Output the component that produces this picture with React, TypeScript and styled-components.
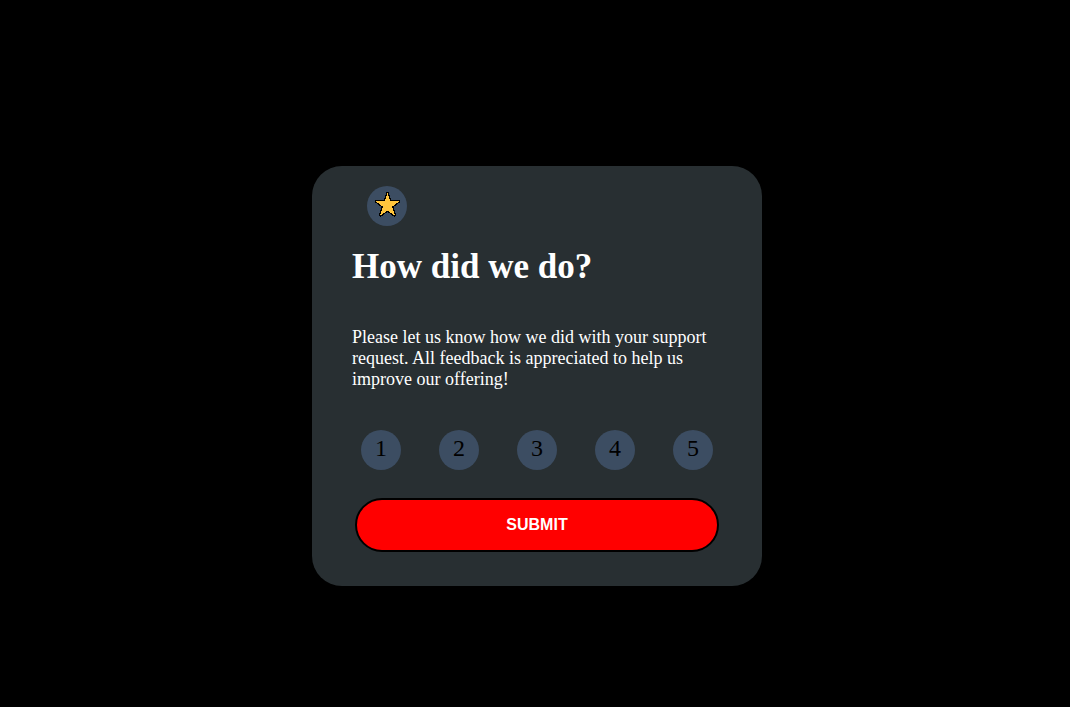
import React from "react";
import styled, { createGlobalStyle } from "styled-components";

const GlobalStyle = createGlobalStyle`
  body {
    margin: 0;
    background: #000000;
    color: #ffffff;
    font-family: "Liberation Serif", serif;
  }
`;

const Page = styled.main`
  display: flex;
  justify-content: center;
  padding: 166px 16px 40px 20px;
`;

const Card = styled.form`
  box-sizing: border-box;
  width: 100%;
  max-width: 450px;
  padding: 20px 40px 34px;
  border-radius: 30px;
  background: #282f32;
`;

const StarBadge = styled.div`
  display: flex;
  width: 40px;
  height: 40px;
  margin-left: 15px;
  border-radius: 50%;
  background: #3c4d62;
`;

const Title = styled.h1`
  margin: 20px 0 40px;
  font-size: 35px;
  line-height: 41px;
`;

const Message = styled.p`
  margin: 0 0 40px;
  font-size: 18px;
  line-height: 21px;
`;

const Ratings = styled.fieldset`
  display: flex;
  justify-content: space-between;
  margin: 0 9px 28px;
  padding: 0;
  border: 0;
`;

const Rating = styled.button`
  width: 40px;
  height: 40px;
  padding: 0 0 4px;
  border: 0;
  border-radius: 50%;
  background: #3c4d62;
  color: #000000;
  font-family: inherit;
  font-size: 24px;
  line-height: 28px;
  cursor: pointer;
`;

const Actions = styled.div`
  display: flex;
  padding: 0 3px;
`;

const Submit = styled.button`
  flex: 1;
  height: 54px;
  border: 2px solid #000000;
  border-radius: 27px;
  background: #ff0000;
  color: #ffffff;
  font-family: "Liberation Sans", Arial, sans-serif;
  font-size: 16px;
  font-weight: bold;
  cursor: pointer;
`;

const Star = () => (
  <svg width="40" height="40" viewBox="0 0 40 40" aria-hidden="true">
    <path
      d="M20.5 6.5 L23.2 14.8 L32.4 15.2 L25.2 20.6 L28 29.8 L20.5 24.6 L13 29.8 L15.8 20.6 L8.6 15.2 L17.8 14.8 Z"
      fill="#ffc53d"
      stroke="#000000"
      strokeWidth="2.4"
      strokeLinejoin="bevel"
      shapeRendering="crispEdges"
      paintOrder="stroke"
    />
  </svg>
);

export default function App() {
  return (
    <>
      <GlobalStyle />
      <Page>
        <Card onSubmit={(event) => event.preventDefault()}>
          <StarBadge>
            <Star />
          </StarBadge>
          <Title>How did we do?</Title>
          <Message>
            Please let us know how we did with your support request. All
            feedback is appreciated to help us improve our offering!
          </Message>
          <Ratings aria-label="Rating">
            {[1, 2, 3, 4, 5].map((value) => (
              <Rating key={value} type="button">
                {value}
              </Rating>
            ))}
          </Ratings>
          <Actions>
            <Submit type="submit">SUBMIT</Submit>
          </Actions>
        </Card>
      </Page>
    </>
  );
}
